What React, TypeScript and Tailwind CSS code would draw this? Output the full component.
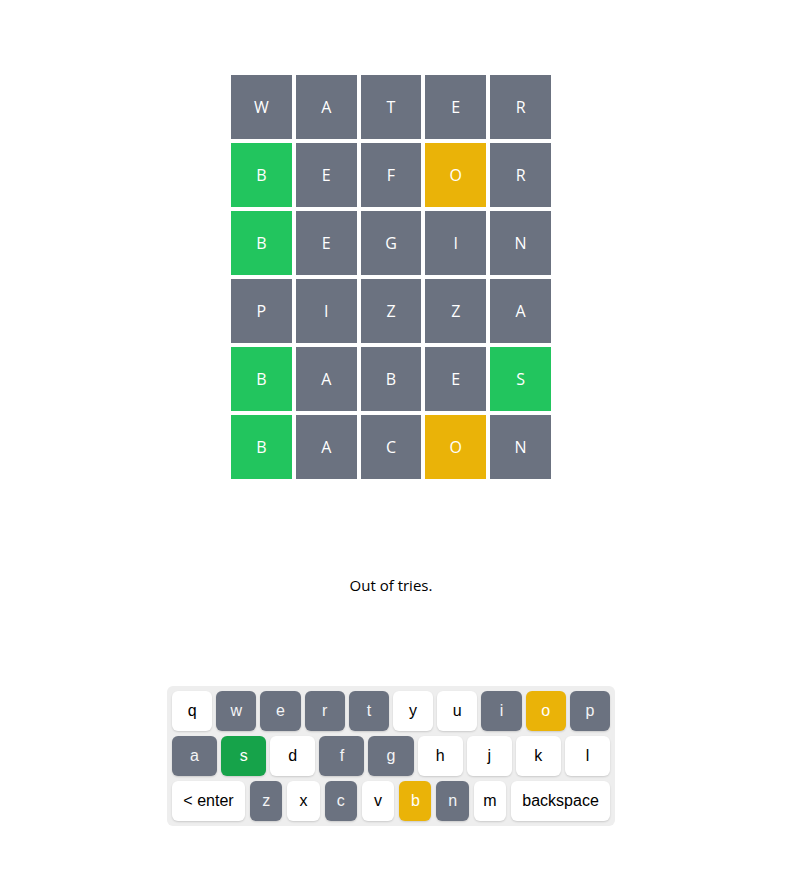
import React from 'react';

type Mark = 'absent' | 'present' | 'correct';

interface Guess {
  word: string;
  marks: Mark[];
}

const guesses: Guess[] = [
  { word: 'WATER', marks: ['absent', 'absent', 'absent', 'absent', 'absent'] },
  { word: 'BEFOR', marks: ['correct', 'absent', 'absent', 'present', 'absent'] },
  { word: 'BEGIN', marks: ['correct', 'absent', 'absent', 'absent', 'absent'] },
  { word: 'PIZZA', marks: ['absent', 'absent', 'absent', 'absent', 'absent'] },
  { word: 'BABES', marks: ['correct', 'absent', 'absent', 'absent', 'correct'] },
  { word: 'BACON', marks: ['correct', 'absent', 'absent', 'present', 'absent'] },
];

const tileColor: Record<Mark, string> = {
  absent: 'bg-[#6b7280]',
  present: 'bg-[#eab308]',
  correct: 'bg-[#22c55e]',
};

// keyboard state after the last guess
const keyState: Record<string, Mark | undefined> = {
  w: 'absent', e: 'absent', r: 'absent', t: 'absent', i: 'absent', o: 'present', p: 'absent',
  a: 'absent', s: 'correct', f: 'absent', g: 'absent',
  z: 'absent', c: 'absent', b: 'present', n: 'absent',
};

const keyColor = (k: string) => {
  const state = keyState[k];
  if (state === 'correct') return 'bg-[#16a34a] text-white';
  if (state === 'present') return 'bg-[#eab308] text-white';
  if (state === 'absent') return 'bg-[#6b7280] text-[#f3f4f6]';
  return 'bg-white text-black';
};

function Key({ label, size = 'flex-1' }: { label: string; size?: string }) {
  return (
    <button
      className={`${size} h-10 rounded-md shadow-[0_1px_2px_rgba(0,0,0,0.15)] text-base ${keyColor(label)}`}
    >
      {label}
    </button>
  );
}

export default function App() {
  const rows = ['qwertyuiop', 'asdfghjkl'];

  return (
    <div className="w-[782px] min-h-[891px] bg-white flex flex-col items-center pt-[75px] font-['Open_Sans',sans-serif]">
      {/* Board */}
      <div className="w-[320px] flex flex-col gap-1">
        {guesses.map((g, r) => (
          <div key={r} className="grid grid-cols-5 gap-1">
            {g.word.split('').map((ch, i) => (
              <div
                key={i}
                className={`h-16 flex items-center justify-center text-white text-base ${tileColor[g.marks[i]]}`}
              >
                {ch}
              </div>
            ))}
          </div>
        ))}
      </div>

      <p className="mt-[94px] text-[15px] leading-6 text-black">Out of tries.</p>

      {/* Keyboard */}
      <div className="mt-[89px] w-[448px] bg-[#eeeeee] rounded-md p-[5px] flex flex-col gap-[5px] font-['Liberation_Sans',Arial,sans-serif]">
        {rows.map(row => (
          <div key={row} className="flex gap-1">
            {row.split('').map(k => (
              <Key key={k} label={k} />
            ))}
          </div>
        ))}
        <div className="flex gap-[5px]">
          <Key label="< enter" size="w-[73px]" />
          {'zxcvbnm'.split('').map(k => (
            <Key key={k} label={k} size="w-[32.3px]" />
          ))}
          <Key label="backspace" size="flex-1" />
        </div>
      </div>
    </div>
  );
}
